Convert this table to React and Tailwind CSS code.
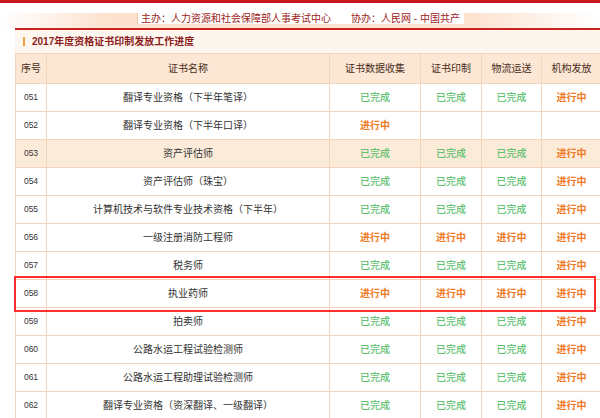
import React from 'react';

const DONE = '已完成';
const DOING = '进行中';

const rows = [
  { id: '051', name: '翻译专业资格（下半年笔译）', s: [DONE, DONE, DONE, DOING] },
  { id: '052', name: '翻译专业资格（下半年口译）', s: [DOING, '', '', ''] },
  { id: '053', name: '资产评估师', s: [DONE, DONE, DONE, DOING], hl: true },
  { id: '054', name: '资产评估师（珠宝）', s: [DONE, DONE, DONE, DOING] },
  { id: '055', name: '计算机技术与软件专业技术资格（下半年）', s: [DONE, DONE, DONE, DOING] },
  { id: '056', name: '一级注册消防工程师', s: [DOING, DOING, DOING, DOING] },
  { id: '057', name: '税务师', s: [DONE, DONE, DONE, DOING] },
  { id: '058', name: '执业药师', s: [DOING, DOING, DOING, DOING] },
  { id: '059', name: '拍卖师', s: [DONE, DONE, DONE, DOING] },
  { id: '060', name: '公路水运工程试验检测师', s: [DONE, DONE, DONE, DOING] },
  { id: '061', name: '公路水运工程助理试验检测师', s: [DONE, DONE, DONE, DOING] },
  { id: '062', name: '翻译专业资格（资深翻译、一级翻译）', s: [DONE, DONE, DONE, DOING] },
];

const headers = ['证书数据收集', '证书印制', '物流运送', '机构发放'];

const Status = ({ value }) => {
  if (value === DONE) return <span className="text-[#63c174] font-medium">{value}</span>;
  if (value === DOING) return <span className="text-[#ef7a26] font-bold">{value}</span>;
  return null;
};

export default function App() {
  return (
    <div
      className="w-[600px] h-[418px] overflow-hidden bg-white relative"
      style={{ fontFamily: '"Liberation Sans", "Noto Sans CJK SC", sans-serif' }}
    >
      {/* top strip */}
      <div className="h-[3px] bg-[#c8161d]" />
      <div className="h-[10px]" />

      {/* sponsor band */}
      <div className="h-[15px] flex justify-center bg-[linear-gradient(to_right,#ffffff_0%,#fde2cf_18%,#fde2cf_78%,#ffffff_100%)]">
        <div className="w-[327px] h-[11px] bg-white border-l border-[#f4c3a3] flex items-center justify-center text-[10px] leading-[11px] text-[#9e1a1a] whitespace-nowrap">
          <span>主办：人力资源和社会保障部人事考试中心</span>
          <span className="ml-[20px]">协办：人民网 - 中国共产</span>
        </div>
      </div>

      <div className="ml-[15px] h-[2px] bg-[#c9211e]" />

      <div className="ml-[15px] bg-[#fdf6ef] h-[388px]">
        {/* title */}
        <div className="h-[23px] flex items-center pl-[8px]">
          <div className="w-[2px] h-[9px] bg-[#f39a3a]" />
          <span className="ml-[7px] text-[10px] font-bold text-[#8c1b1b]">2017年度资格证书印制发放工作进度</span>
        </div>

        {/* table */}
        <div className="relative">
          <table className="border-collapse table-fixed w-[586px] text-[10px] text-[#333]">
            <colgroup>
              <col className="w-[31px]" />
              <col className="w-[283px]" />
              <col className="w-[91px]" />
              <col className="w-[61px]" />
              <col className="w-[60px]" />
              <col className="w-[60px]" />
            </colgroup>
            <thead>
              <tr className="h-[30px] bg-[#fbe7d3] text-[#4a2c1e]">
                <th className="border border-[#f3d5bb] font-normal">序号</th>
                <th className="border border-[#f3d5bb] font-normal">证书名称</th>
                {headers.map(h => (
                  <th key={h} className="border border-[#f3d5bb] font-normal whitespace-nowrap">{h}</th>
                ))}
              </tr>
            </thead>
            <tbody>
              {rows.map(r => (
                <tr key={r.id} className={`h-[28px] ${r.hl ? 'bg-[#fcebd9]' : 'bg-white'}`}>
                  <td className="border border-[#f3d5bb] text-center text-[8.5px]">{r.id}</td>
                  <td className="border border-[#f3d5bb] text-center whitespace-nowrap">{r.name}</td>
                  {r.s.map((v, i) => (
                    <td key={i} className="border border-[#f3d5bb] text-center whitespace-nowrap">
                      <Status value={v} />
                    </td>
                  ))}
                </tr>
              ))}
            </tbody>
          </table>

          {/* highlight annotation */}
          <div className="absolute left-[-1px] top-[223px] w-[582px] h-[36px] border-2 border-[#ff2d2d] pointer-events-none" />
        </div>
      </div>
    </div>
  );
}
